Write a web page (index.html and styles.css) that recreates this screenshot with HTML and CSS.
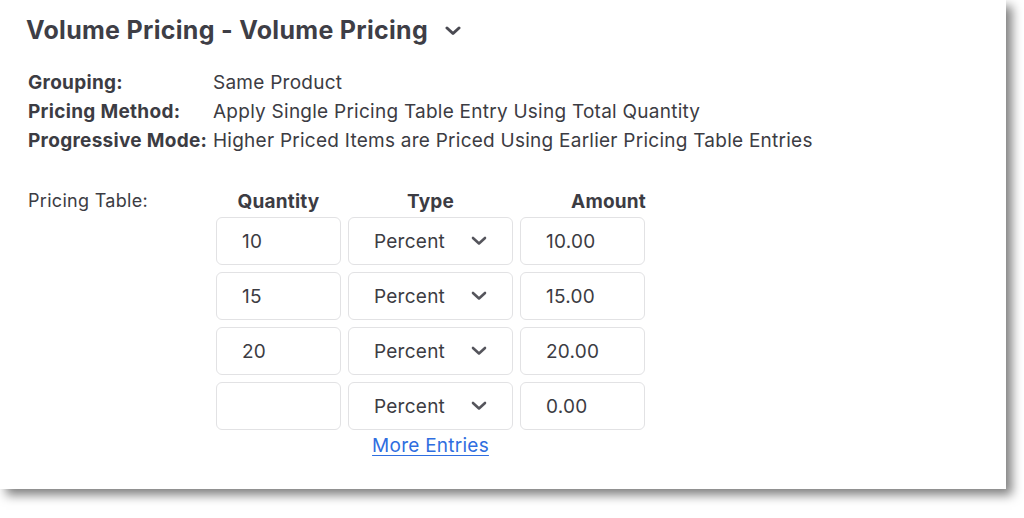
FILE: index.html
```html
<!DOCTYPE html>
<html>
<head>
<meta charset="utf-8">
<link rel="stylesheet" href="styles.css">
</head>
<body>
<div class="panel">
  <div class="title-row">
    <h1 class="title">Volume Pricing - Volume Pricing</h1>
    <svg class="title-chevron" width="16" height="10" viewBox="0 0 16 10"><path d="M2 2 L8 7.5 L14 2" fill="none" stroke="#4a4a52" stroke-width="3" stroke-linecap="round" stroke-linejoin="round"/></svg>
  </div>
  <div class="info">
    <div class="info-label">Grouping:</div><div class="info-value">Same Product</div>
    <div class="info-label">Pricing Method:</div><div class="info-value">Apply Single Pricing Table Entry Using Total Quantity</div>
    <div class="info-label">Progressive Mode:</div><div class="info-value">Higher Priced Items are Priced Using Earlier Pricing Table Entries</div>
  </div>
  <div class="pricing">
    <div class="pricing-label">Pricing Table:</div>
    <div class="table">
      <div class="head-row">
        <div class="head head-center">Quantity</div>
        <div class="head head-center">Type</div>
        <div class="head head-right">Amount</div>
      </div>
      <div class="grid">
        <div class="box">10</div>
        <div class="box select"><span>Percent</span><svg class="sel-chevron" width="16" height="10" viewBox="0 0 16 10"><path d="M2 2 L8 7.5 L14 2" fill="none" stroke="#55555c" stroke-width="2.6" stroke-linecap="round" stroke-linejoin="round"/></svg></div>
        <div class="box">10.00</div>

        <div class="box">15</div>
        <div class="box select"><span>Percent</span><svg class="sel-chevron" width="16" height="10" viewBox="0 0 16 10"><path d="M2 2 L8 7.5 L14 2" fill="none" stroke="#55555c" stroke-width="2.6" stroke-linecap="round" stroke-linejoin="round"/></svg></div>
        <div class="box">15.00</div>

        <div class="box">20</div>
        <div class="box select"><span>Percent</span><svg class="sel-chevron" width="16" height="10" viewBox="0 0 16 10"><path d="M2 2 L8 7.5 L14 2" fill="none" stroke="#55555c" stroke-width="2.6" stroke-linecap="round" stroke-linejoin="round"/></svg></div>
        <div class="box">20.00</div>

        <div class="box"></div>
        <div class="box select"><span>Percent</span><svg class="sel-chevron" width="16" height="10" viewBox="0 0 16 10"><path d="M2 2 L8 7.5 L14 2" fill="none" stroke="#55555c" stroke-width="2.6" stroke-linecap="round" stroke-linejoin="round"/></svg></div>
        <div class="box">0.00</div>
      </div>
      <div class="more"><a href="#" class="more-link">More Entries</a></div>
    </div>
  </div>
</div>
</body>
</html>
```

FILE: styles.css
```css
html, body {
  margin: 0;
  padding: 0;
  background: #ffffff;
}
body {
  font-family: Inter, "Noto Sans", sans-serif;
  color: #3c3c43;
  height: 518px;
}
.panel {
  width: 1006px;
  height: 489px;
  box-sizing: border-box;
  background: #ffffff;
  box-shadow: 6px 6px 10px rgba(0, 0, 0, 0.5);
  padding: 14px 0 0 26px;
}
.title-row {
  display: flex;
  align-items: center;
  height: 32px;
}
.title {
  margin: 0;
  font-size: 25px;
  font-weight: 700;
  color: #3e3e46;
  letter-spacing: 0.3px;
}
.title-chevron {
  margin-left: 17px;
  margin-top: 2px;
}
.info {
  display: grid;
  grid-template-columns: 185px auto;
  margin-top: 22px;
  margin-left: 2px;
  font-size: 19px;
  letter-spacing: 0.25px;
  line-height: 29px;
}
.info-label {
  font-weight: 700;
  white-space: nowrap;
  letter-spacing: 0.3px;
}
.info-value {
  white-space: nowrap;
}
.pricing {
  display: flex;
  margin-top: 34px;
  margin-left: 2px;
}
.pricing-label {
  width: 188px;
  font-size: 18px;
  letter-spacing: 0.3px;
  line-height: 22px;
  padding-top: 1px;
}
.table {
  display: flex;
  flex-direction: column;
  width: 430px;
}
.head-row {
  display: grid;
  grid-template-columns: 125px 165px 125px;
  column-gap: 7px;
  height: 26px;
  margin-bottom: 2px;
}
.grid {
  display: grid;
  grid-template-columns: 125px 165px 125px;
  grid-auto-rows: 48px;
  column-gap: 7px;
  row-gap: 7px;
}
.head {
  font-size: 19px;
  font-weight: 700;
  line-height: 26px;
  letter-spacing: 0.2px;
}
.head-center { text-align: center; }
.head-right { text-align: right; margin-right: -1px; }
.box {
  box-sizing: border-box;
  border: 1px solid #e2e2e4;
  border-radius: 6px;
  display: flex;
  align-items: center;
  padding-left: 25px;
  font-size: 19px;
  letter-spacing: 0.25px;
  color: #3c3c43;
}
.select {
  justify-content: space-between;
  padding-right: 25px;
}
.sel-chevron {
  display: block;
}
.more {
  text-align: center;
  margin-top: 4px;
  width: 429px;
}
.more-link {
  font-size: 19px;
  letter-spacing: 0.25px;
  color: #2f6ee0;
  text-decoration: underline;
  text-underline-offset: 3px;
}
```
